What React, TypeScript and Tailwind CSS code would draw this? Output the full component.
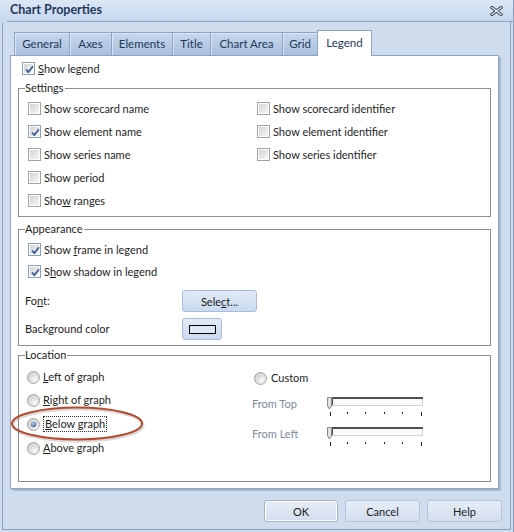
import { ReactNode, useId } from 'react';

const tabs = [
  { label: 'General', w: 'w-[55px]' },
  { label: 'Axes', w: 'w-[42px]' },
  { label: 'Elements', w: 'w-[61px]' },
  { label: 'Title', w: 'w-[38px]' },
  { label: 'Chart Area', w: 'w-[72px]' },
  { label: 'Grid', w: 'w-[35px]' },
];

function CheckBox({ checked = false }: { checked?: boolean }) {
  return (
    <span
      className={`relative flex h-[13px] w-[13px] shrink-0 items-center justify-center border ${
        checked ? 'border-[#8aa0bf]' : 'border-[#a3a3a3]'
      } bg-white p-px`}
    >
      <span className="h-full w-full bg-linear-to-br from-[#d4d4d4] to-[#f6f6f6]" />
      {checked && (
        <svg width="11" height="11" viewBox="0 0 11 11" className="absolute left-px top-px">
          <path d="M2 5.5 L4.3 8 L9 2.2" fill="none" stroke="#3b5c94" strokeWidth="1.8" />
        </svg>
      )}
    </span>
  );
}

function Radio({ checked = false }: { checked?: boolean }) {
  const id = useId();
  return (
    <svg width="13" height="13" viewBox="0 0 13 13" className="shrink-0">
      <defs>
        <radialGradient id={`${id}-g`} cx="0.65" cy="0.7" r="0.7">
          <stop offset="0" stopColor="#ffffff" />
          <stop offset="1" stopColor="#c8c8c8" />
        </radialGradient>
        <radialGradient id={`${id}-d`} cx="0.4" cy="0.35" r="0.7">
          <stop offset="0" stopColor="#b9cdea" />
          <stop offset="1" stopColor="#3f5f93" />
        </radialGradient>
      </defs>
      <circle cx="6.5" cy="6.5" r="6" fill={`url(#${id}-g)`} stroke="#a5a5a5" />
      <circle cx="6.5" cy="6.5" r="4.2" fill="none" stroke="#e3e3e3" />
      {checked && <circle cx="6.5" cy="6.5" r="2.8" fill={`url(#${id}-d)`} />}
    </svg>
  );
}

function Option({ children, checked, h = 'h-[23px]' }: { children: ReactNode; checked?: boolean; h?: string }) {
  return (
    <div className={`flex ${h} items-center gap-[3px]`}>
      <CheckBox checked={checked} />
      <span className="leading-none">{children}</span>
    </div>
  );
}

function GroupBox({ title, className, children }: { title: string; className: string; children: ReactNode }) {
  return (
    <div className={`relative ml-[7px] w-[473px] border border-[#8d8d8d] ${className}`}>
      <span className="absolute -top-[8px] left-[6px] bg-white pr-px leading-[14px]">{title}</span>
      {children}
    </div>
  );
}

function Slider() {
  const ticks = [3, 20, 38, 57, 75, 94];
  return (
    <svg width="100" height="24" viewBox="0 0 100 24">
      <rect x="5.5" y="6.5" width="90" height="7" fill="#fbfbfb" stroke="#d6d3cc" />
      <line x1="5" y1="6" x2="96" y2="6" stroke="#505050" strokeWidth="2" />
      <line x1="5.5" y1="5" x2="5.5" y2="13" stroke="#505050" />
      <path d="M0.5 5.5 H4.5 V14 L2.5 17 L0.5 14 Z" fill="#d9d9d9" stroke="#8a8a8a" />
      <path d="M1.5 7 H3.5 M1.5 9 H3.5 M1.5 11 H3.5 M1.5 13 H3.5" stroke="#f4f4f4" />
      {ticks.map((x) => (
        <line key={x} x1={x + 0.5} y1="20" x2={x + 0.5} y2={x === 3 || x === 94 ? 24 : 22} stroke="#222" />
      ))}
    </svg>
  );
}

function DialogButton({ label, focused, width }: { label: string; focused?: boolean; width: string }) {
  return (
    <button
      className={`flex h-[22px] ${width} items-center justify-center rounded-[3px] border ${
        focused ? 'border-[#9fb5d2] shadow-[inset_0_0_0_1px_#ffffff]' : 'border-[#b3c4db]'
      } bg-linear-to-b from-[#e6edf7] to-[#d3deee] leading-none text-[#1c1c1c]`}
    >
      {label}
    </button>
  );
}

export default function App() {
  return (
    <div className="relative h-[532px] w-[514px] border-r border-[#8aa0bd] bg-[#cfdcee] font-['Lato',sans-serif] text-[11px] text-[#1e1e1e]">
      {/* caption */}
      <div className="flex h-[21px] items-center justify-between bg-linear-to-b from-[#dce7f5] to-[#c6d7ed] pl-[10px] pr-[10px]">
        <span className="text-[12.5px] font-bold text-[#1e395b]">Chart Properties</span>
        <svg width="13" height="10" viewBox="0 0 13 10">
          <path d="M2 1.5 L11 8.5 M11 1.5 L2 8.5" stroke="#3b4d63" strokeWidth="3.2" strokeLinecap="square" />
          <path d="M2 1.5 L11 8.5 M11 1.5 L2 8.5" stroke="#f3f6fa" strokeWidth="1.2" strokeLinecap="square" />
        </svg>
      </div>
      <div className="ml-[7px] h-px bg-[#8ea3bf]" />

      <div className="ml-[2px] h-[508px] w-[509px] border-b border-l border-r border-[#8aa0bd] pt-[8px]">
        {/* tab strip */}
        <div className="flex h-[25px] items-end pl-[11px]">
          {tabs.map((t) => (
            <div
              key={t.label}
              className={`flex h-[23px] ${t.w} items-center justify-center border-l border-t border-[#8ca3c2] bg-linear-to-b from-[#c7d7ec] to-[#a9c0dd] text-[11.5px] text-[#1e395b] shadow-[inset_1px_1px_0_#dbe6f4]`}
            >
              {t.label}
            </div>
          ))}
          <div className="relative z-10 -mb-px flex h-[26px] w-[55px] items-center justify-center border-l border-r border-t border-[#8ca3c2] bg-white pb-[2px] text-[11.5px] text-[#1e395b]">
            Legend
          </div>
        </div>

        {/* page */}
        <div className="ml-[7px] h-[434px] w-[489px] border border-[#8ca3c2] bg-white shadow-[2px_2px_0_#a7b8d0]">
          <div className="ml-[11px] mt-[6px] flex h-[13px] items-center gap-[3px]">
            <CheckBox checked />
            <span className="leading-none">
              <span className="underline">S</span>how legend
            </span>
          </div>

          <GroupBox title="Settings" className="mt-[13px] h-[129px]">
            <div className="grid grid-cols-[229px_1fr] pl-[9px] pt-[8px]">
              <div>
                <Option>Show scorecard name</Option>
                <Option checked>Show element name</Option>
                <Option>Show series name</Option>
                <Option>Show period</Option>
                <Option>
                  Sho<span className="underline">w</span> ranges
                </Option>
              </div>
              <div>
                <Option>Show scorecard identifier</Option>
                <Option>Show element identifier</Option>
                <Option>Show series identifier</Option>
              </div>
            </div>
          </GroupBox>

          <GroupBox title="Appearance" className="mt-[12px] h-[117px]">
            <div className="pl-[9px] pt-[8px]">
              <Option checked h="h-[22px]">
                Show <span className="underline">f</span>rame in legend
              </Option>
              <Option checked h="h-[22px]">
                S<span className="underline">h</span>ow shadow in legend
              </Option>
            </div>
            <div className="mt-[8px] flex items-center pl-[6px]">
              <span className="w-[157px]">
                Fo<span className="underline">n</span>t:
              </span>
              <button className="flex h-[22px] w-[75px] items-center justify-center rounded-[3px] border border-[#a9bdd8] bg-linear-to-b from-[#e3ebf6] to-[#c9d9ee] leading-none text-[#1c1c1c]">
                Sele<span className="underline">c</span>t...
              </button>
            </div>
            <div className="mt-[6px] flex items-center pl-[6px]">
              <span className="w-[157px]">Background color</span>
              <button className="flex h-[22px] w-[40px] items-center justify-center rounded-[3px] border border-[#a9bdd8] bg-linear-to-b from-[#e3ebf6] to-[#c9d9ee]">
                <span className="h-[9px] w-[27px] border border-black bg-[#dde8f5]" />
              </button>
            </div>
          </GroupBox>

          <GroupBox title="Location" className="mt-[9px] h-[127px]">
            <div className="flex pl-[8px] pt-[9px]">
              <div className="w-[225px]">
                <div className="flex h-[24px] items-center gap-[3px]">
                  <Radio />
                  <span><span className="underline">L</span>eft of graph</span>
                </div>
                <div className="flex h-[23px] items-center gap-[3px]">
                  <Radio />
                  <span><span className="underline">R</span>ight of graph</span>
                </div>
                <div className="flex h-[24px] items-center gap-[3px]">
                  <Radio checked />
                  <span className="border border-dotted border-[#333] px-px leading-[14px]">
                    <span className="underline">B</span>elow graph
                  </span>
                </div>
                <div className="flex h-[24px] items-center gap-[3px]">
                  <Radio />
                  <span><span className="underline">A</span>bove graph</span>
                </div>
              </div>
              <div className="mt-px">
                <div className="flex h-[24px] items-center gap-[4px] pl-[2px]">
                  <Radio />
                  <span>Custom</span>
                </div>
                <div className="mt-[2px] flex h-[24px] items-center">
                  <span className="w-[75px] text-[#7d8b9c]">From Top</span>
                  <Slider />
                </div>
                <div className="mt-[6px] flex h-[24px] items-center">
                  <span className="w-[75px] text-[#7d8b9c]">From Left</span>
                  <Slider />
                </div>
              </div>
            </div>
          </GroupBox>
        </div>

        {/* dialog buttons */}
        <div className="mt-[11px] flex justify-end gap-[7px] pr-[8px]">
          <DialogButton label="OK" width="w-[74px]" focused />
          <DialogButton label="Cancel" width="w-[75px]" />
          <DialogButton label="Help" width="w-[75px]" />
        </div>
      </div>

      {/* red annotation ring */}
      <svg className="pointer-events-none absolute left-[8px] top-[402px]" width="142" height="44" viewBox="0 0 142 44">
        <ellipse cx="70" cy="23" rx="65" ry="16" fill="none" stroke="#6b6b6b" strokeOpacity="0.25" strokeWidth="3" />
        <ellipse cx="69" cy="21.5" rx="65" ry="16" fill="none" stroke="#b8482c" strokeWidth="2" />
      </svg>
    </div>
  );
}
